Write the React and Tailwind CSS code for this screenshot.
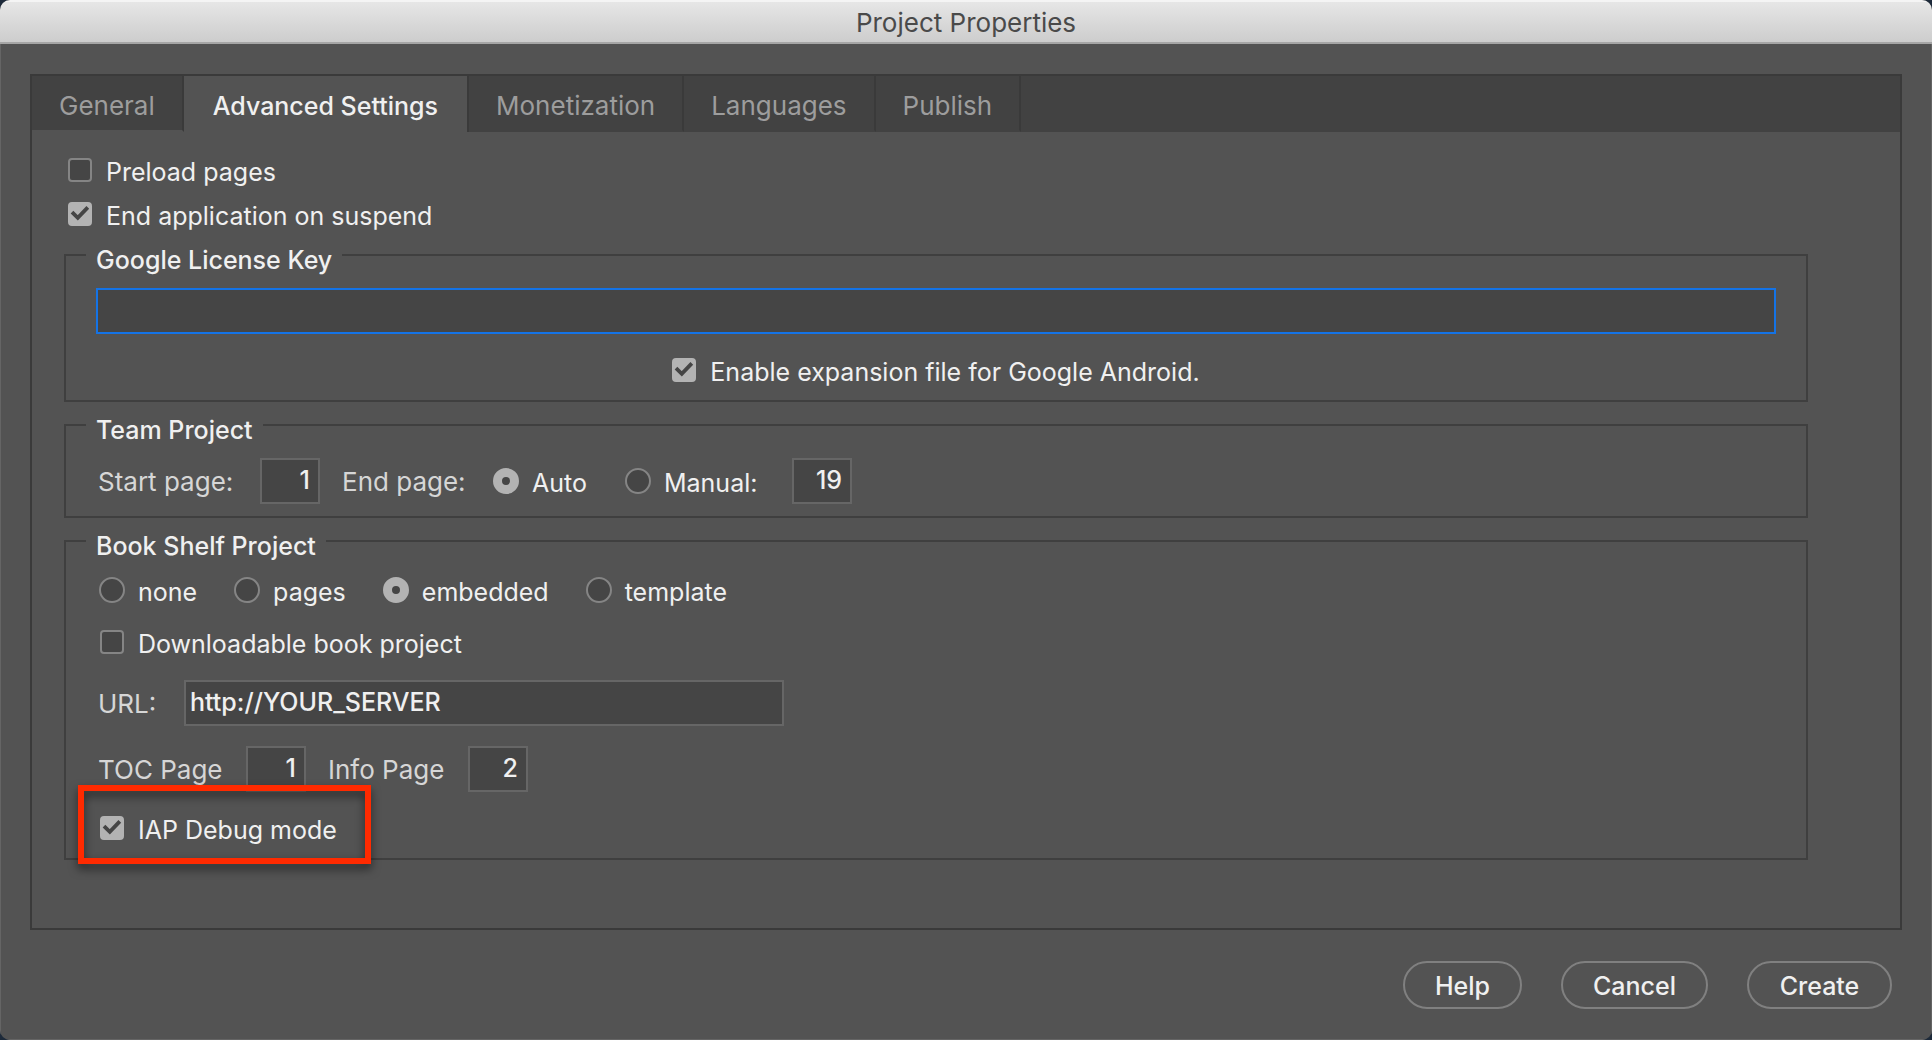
import { useState } from "react";

const TABS = ["General", "Advanced Settings", "Monetization", "Languages", "Publish"];

function CheckBox({ label, defaultChecked = false }) {
  return (
    <label className="flex h-6 items-center gap-3.5">
      <span className="grid size-6 shrink-0">
        <input
          type="checkbox"
          defaultChecked={defaultChecked}
          className="peer col-start-1 row-start-1 size-6 appearance-none rounded-sm border-2 border-[#858585] bg-[#454545] checked:border-[#b3b3b3] checked:bg-[#b3b3b3]"
        />
        <svg
          viewBox="0 0 24 24"
          aria-hidden="true"
          className="pointer-events-none invisible col-start-1 row-start-1 size-6 peer-checked:visible"
        >
          <path d="M4 10.2 9.8 15.8 19.8 5.4" fill="none" stroke="#454545" strokeWidth="3.8" />
        </svg>
      </span>
      <span className="pt-1 whitespace-nowrap text-[#f0f0f0]">{label}</span>
    </label>
  );
}

function Radio({ name, label, defaultChecked = false }) {
  return (
    <label className="flex h-[26px] items-center gap-[13px]">
      <input
        type="radio"
        name={name}
        defaultChecked={defaultChecked}
        className="size-[26px] shrink-0 appearance-none rounded-full border-2 border-[#858585] bg-[#454545] checked:border-9 checked:border-[#b3b3b3]"
      />
      <span className="pt-1 whitespace-nowrap text-[#f0f0f0]">{label}</span>
    </label>
  );
}

function PageInput({ id, value, label }) {
  return (
    <input
      id={id}
      type="text"
      aria-label={label}
      defaultValue={value}
      className="h-[46px] w-[60px] border-2 border-[#666] bg-[#454545] pr-2 pb-0.5 text-right font-medium text-[#f0f0f0] outline-none"
    />
  );
}

function Caption({ htmlFor, className, children }) {
  const Tag = htmlFor ? "label" : "span";
  return (
    <Tag htmlFor={htmlFor} className={`pt-0.5 text-[26px] whitespace-nowrap text-[#d6d6d6] ${className}`}>
      {children}
    </Tag>
  );
}

function Group({ title, className, children }) {
  return (
    <fieldset className="border-2 border-[#3f3f3f] px-[30px]">
      <legend className="-ml-2.5 px-2.5 pt-2.5 font-medium text-[#f0f0f0]">{title}</legend>
      <div className={className}>{children}</div>
    </fieldset>
  );
}

function DialogButton({ children, className }) {
  return (
    <button
      type="button"
      className={`h-12 rounded-full border-2 border-[#808080] pt-0.5 font-medium text-[#f0f0f0] ${className}`}
    >
      {children}
    </button>
  );
}

export default function App() {
  const [active, setActive] = useState("Advanced Settings");

  return (
    <div className="min-h-screen bg-[#1d2a3a] font-['Inter',sans-serif] text-[25px] leading-[26px]">
      <div className="flex min-h-screen flex-col overflow-hidden rounded-[10px] bg-[#535353]">
        <header className="flex h-11 items-center justify-center border-t-2 border-b-2 border-t-[#f4f4f4] border-b-[#a6a6a6] bg-linear-to-b from-[#e6e6e6] to-[#cdcdcd]">
          <h1 className="pt-0.5 text-[26px] text-[#4a4a4a]">Project Properties</h1>
        </header>

        <div className="flex flex-1 flex-col border-x border-b border-[#656565] px-[29px] pt-[30px] pb-[30px]">
          <main className="flex flex-1 flex-col border-2 border-[#3a3a3a]">
            <div role="tablist" className="flex h-14 bg-[#424242]">
              {TABS.map((tab) => (
                <button
                  key={tab}
                  type="button"
                  role="tab"
                  aria-selected={active === tab}
                  onClick={() => setActive(tab)}
                  className={
                    active === tab
                      ? "border-r-2 border-[#3a3a3a] bg-[#535353] px-[29px] pt-1 font-medium text-[#f0f0f0]"
                      : "border-r-2 border-b-2 border-r-[#3a3a3a] border-b-[#424242] px-[27px] pt-1.5 text-[26px] text-[#9d9d9d] first:border-b-[#535353]"
                  }
                >
                  {tab}
                </button>
              ))}
            </div>

            <div role="tabpanel" className="pt-[26px] pr-[92px] pb-8 pl-8">
              <div className="flex flex-col gap-5 pb-[11px] pl-1">
                <CheckBox label="Preload pages" />
                <CheckBox label="End application on suspend" defaultChecked />
              </div>

              <div className="flex flex-col gap-[5px]">
                <Group title="Google License Key" className="flex flex-col items-center gap-6 pt-[15px] pb-[18px]">
                  <input
                    type="text"
                    aria-label="Google License Key"
                    className="h-[46px] w-full border-2 border-[#1473e6] bg-[#454545] px-1 text-[#f0f0f0] outline-none"
                  />
                  <CheckBox label="Enable expansion file for Google Android." defaultChecked />
                </Group>

                <Group title="Team Project" className="flex items-center pt-[15px] pb-3">
                  <Caption htmlFor="start-page" className="w-[164px] pl-0.5">Start page:</Caption>
                  <PageInput id="start-page" value="1" />
                  <Caption className="w-[173px] pl-[22px]">End page:</Caption>
                  <div className="flex w-[299px] gap-[38px]">
                    <Radio name="end-page" label="Auto" defaultChecked />
                    <Radio name="end-page" label="Manual:" />
                  </div>
                  <PageInput label="Manual end page" value="19" />
                </Group>

                <Group title="Book Shelf Project" className="pt-[18px] pb-[18px]">
                  <div className="flex gap-[37px] pl-[3px]">
                    <Radio name="shelf" label="none" />
                    <Radio name="shelf" label="pages" />
                    <Radio name="shelf" label="embedded" defaultChecked />
                    <Radio name="shelf" label="template" />
                  </div>
                  <div className="mt-[27px] flex pl-1">
                    <CheckBox label="Downloadable book project" />
                  </div>
                  <div className="mt-[26px] flex items-center">
                    <Caption htmlFor="url" className="w-[88px] pl-0.5">URL:</Caption>
                    <input
                      id="url"
                      type="text"
                      defaultValue="http://YOUR_SERVER"
                      className="h-[46px] w-[600px] border-2 border-[#666] bg-[#454545] px-1 pb-0.5 font-medium text-[#f0f0f0] outline-none"
                    />
                  </div>
                  <div className="mt-5 flex items-center">
                    <Caption htmlFor="toc-page" className="w-[150px] pl-0.5">TOC Page</Caption>
                    <PageInput id="toc-page" value="1" />
                    <Caption htmlFor="info-page" className="w-[162px] pl-[22px]">Info Page</Caption>
                    <PageInput id="info-page" value="2" />
                  </div>
                  <div className="mt-6 flex pl-1">
                    <div className="relative">
                      <CheckBox label="IAP Debug mode" defaultChecked />
                      <div className="pointer-events-none absolute -top-[31px] -right-[34px] -bottom-6 -left-[22px] border-6 border-[#ff2a00] drop-shadow-[0_5px_5px_rgba(0,0,0,0.55)]" />
                    </div>
                  </div>
                </Group>
              </div>
            </div>
          </main>

          <footer className="flex justify-end gap-[39px] pt-[31px] pr-2.5">
            <DialogButton className="w-[119px]">Help</DialogButton>
            <DialogButton className="w-[147px]">Cancel</DialogButton>
            <DialogButton className="w-[145px]">Create</DialogButton>
          </footer>
        </div>
      </div>
    </div>
  );
}
